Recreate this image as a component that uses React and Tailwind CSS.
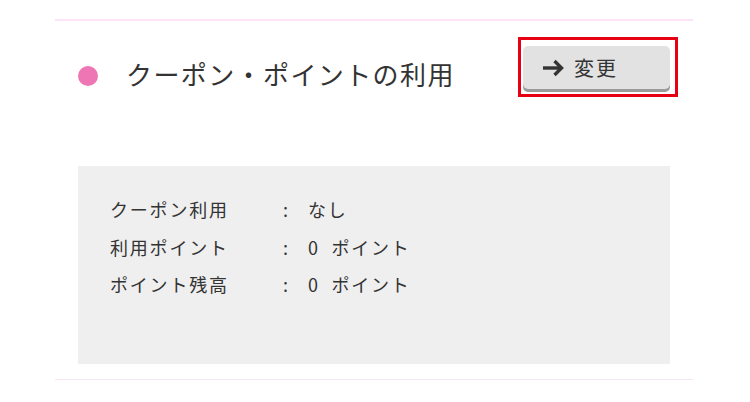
import React from 'react'

const rows = [
  { label: 'クーポン利用', value: 'なし' },
  { label: '利用ポイント', value: '0\u00a0 ポイント' },
  { label: 'ポイント残高', value: '0\u00a0 ポイント' },
]

function ArrowIcon() {
  return (
    <svg width="23" height="18" viewBox="0 0 23 18" fill="none">
      <path d="M1 9H20" stroke="#333" strokeWidth="3.4" />
      <path d="M12.5 2L19.5 9L12.5 16" stroke="#333" strokeWidth="3.4" strokeLinejoin="miter" />
    </svg>
  )
}

export default function App() {
  return (
    <div
      className="w-[750px] h-[402px] bg-white pt-[19px] text-[#333]"
      style={{ fontFamily: '"Noto Sans CJK JP", "Noto Sans", sans-serif' }}
    >
      <div className="ml-[55px] w-[638px] border-t-2 border-[#fce4f6]">
        <div className="flex justify-between">
          <div className="flex items-start pl-[23px] pt-[38px]">
            <span className="mt-[7px] w-[20px] h-[20px] rounded-full bg-[#ef76b4]" />
            <h2 className="ml-[28px] text-[26px] leading-[30px] tracking-[1.4px] font-normal">
              クーポン・ポイントの利用
            </h2>
          </div>
          <div className="pr-[15px] pt-[16px]">
            <div className="w-[160px] h-[60px] border-[3px] border-[#e60012] pl-[2px] pr-[5px] pt-[6px]">
              <button className="w-full h-[43px] rounded-[5px] bg-[#e2e2e2] shadow-[0_3px_0_#9b9b9b] flex items-center pl-[19px] gap-[9px] text-[20px] tracking-[2px]">
                <ArrowIcon />
                <span className="leading-none">変更</span>
              </button>
            </div>
          </div>
        </div>

        <div className="mt-[69px] mx-[23px] h-[198px] bg-[#efefef] pl-[32px] pt-[25px]">
          {rows.map((row) => (
            <div key={row.label} className="flex text-[18px] leading-[37.5px] tracking-[1.8px]">
              <span className="w-[173px]">{row.label}</span>
              <span className="w-[25px]">:</span>
              <span>{row.value}</span>
            </div>
          ))}
        </div>

        <div className="mt-[15px] border-b border-[#f7e4f4]" />
      </div>
    </div>
  )
}
